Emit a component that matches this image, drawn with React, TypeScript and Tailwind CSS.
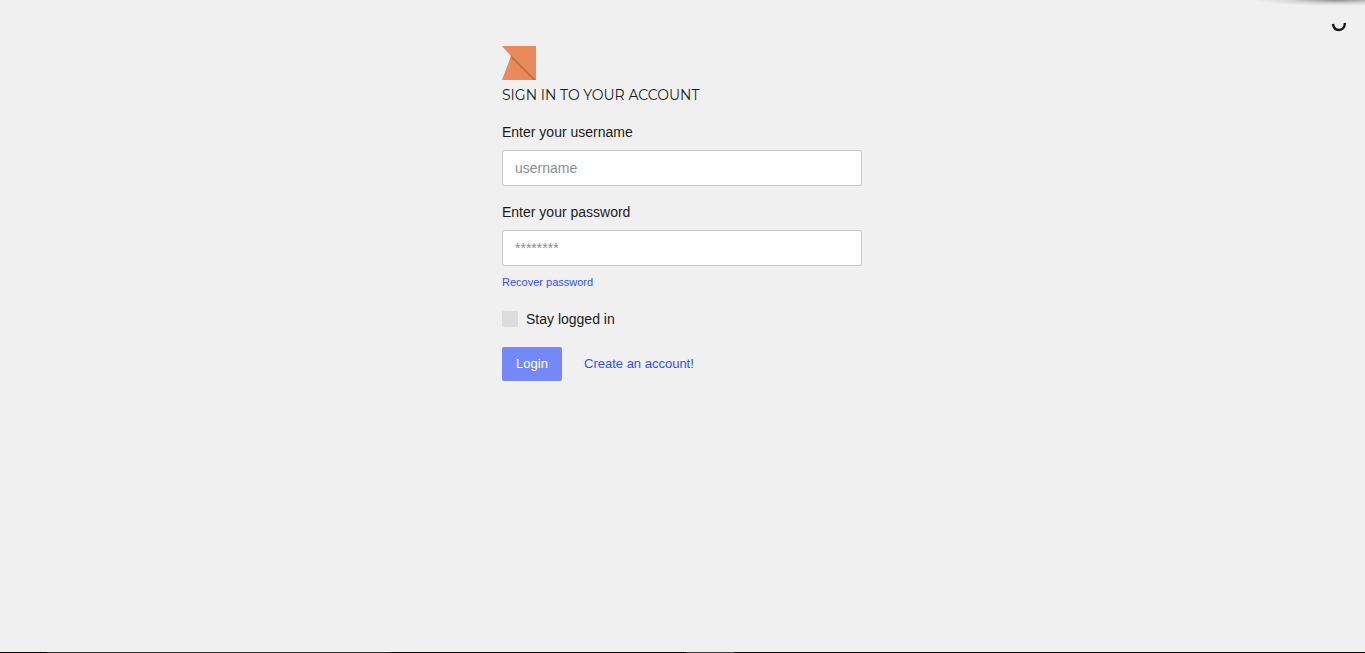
import React from "react";

function Logo() {
  return (
    <svg className="block size-[34px]" viewBox="0 0 34 34" aria-hidden="true">
      <path d="M0 0H34V34H0L9 10Z" fill="#e9895d" />
      <path d="M9 9L34 34H31L8.500 11.500Z" fill="#c5714d" />
    </svg>
  );
}

function Spinner() {
  return (
    <svg className="absolute top-[19px] right-[18px] size-4" viewBox="0 0 16 16" fill="none" aria-hidden="true">
      <path d="M2 5C2.500 8.800 4.600 11 8 11S13.500 8.800 14 4" stroke="#151515" strokeWidth="2.400" />
    </svg>
  );
}

type FieldProps = { id: string; label: string; type: string; placeholder: string };

function Field({ id, label, type, placeholder }: FieldProps) {
  return (
    <div className="flex flex-col gap-2">
      <label htmlFor={id} className="text-sm leading-5">
        {label}
      </label>
      <input
        id={id}
        type={type}
        placeholder={placeholder}
        className="h-9 w-full rounded-xs border border-[#cacaca] bg-white px-3 text-sm outline-none placeholder:text-[#888f94]"
      />
    </div>
  );
}

export default function App() {
  return (
    <div className="relative flex min-h-screen flex-col overflow-hidden bg-[#f0f0f0] font-['Liberation_Sans',Arial,sans-serif] text-[#1b1b1b]">
      <div className="absolute top-0 right-0 h-1.5 w-28 bg-radial-[ellipse_at_75%_0%] from-black/40 via-black/10 via-40% to-transparent to-70%" />
      <Spinner />
      <main className="mx-auto w-full max-w-[361px] flex-1 pt-[46px] pr-px">
        <Logo />
        <h1 className="mt-[5px] font-['Montserrat','Inter',sans-serif] text-sm leading-5">SIGN IN TO YOUR ACCOUNT</h1>
        <form className="mt-[17px]" onSubmit={(e) => e.preventDefault()}>
          <div className="flex flex-col gap-4">
            <Field id="username" label="Enter your username" type="text" placeholder="username" />
            <Field id="password" label="Enter your password" type="password" placeholder="********" />
          </div>
          <a href="#recover" className="mt-2 block w-fit text-[11px] leading-4 text-[#304ffe]">
            Recover password
          </a>
          <div className="mt-[19px] flex items-center gap-2">
            <input
              id="stay"
              type="checkbox"
              className="size-4 appearance-none rounded-xs bg-[#dcdcdc] checked:bg-[#7488fa]"
            />
            <label htmlFor="stay" className="text-sm leading-5">
              Stay logged in
            </label>
          </div>
          <div className="mt-[18px] flex items-center gap-[22px]">
            <button type="submit" className="h-[34px] w-[60px] rounded-xs bg-[#7488fa] text-[13px] text-white">
              Login
            </button>
            <a href="#register" className="text-[13px] text-[#304ffe]">
              Create an account!
            </a>
          </div>
        </form>
      </main>
      <footer className="flex h-px bg-[#05060c]">
        <div className="w-[47px]" />
        <div className="w-[344px] bg-[#2b2b2b]" />
        <div className="w-[295px]" />
        <div className="w-12 bg-[#3c3c42]" />
      </footer>
    </div>
  );
}
